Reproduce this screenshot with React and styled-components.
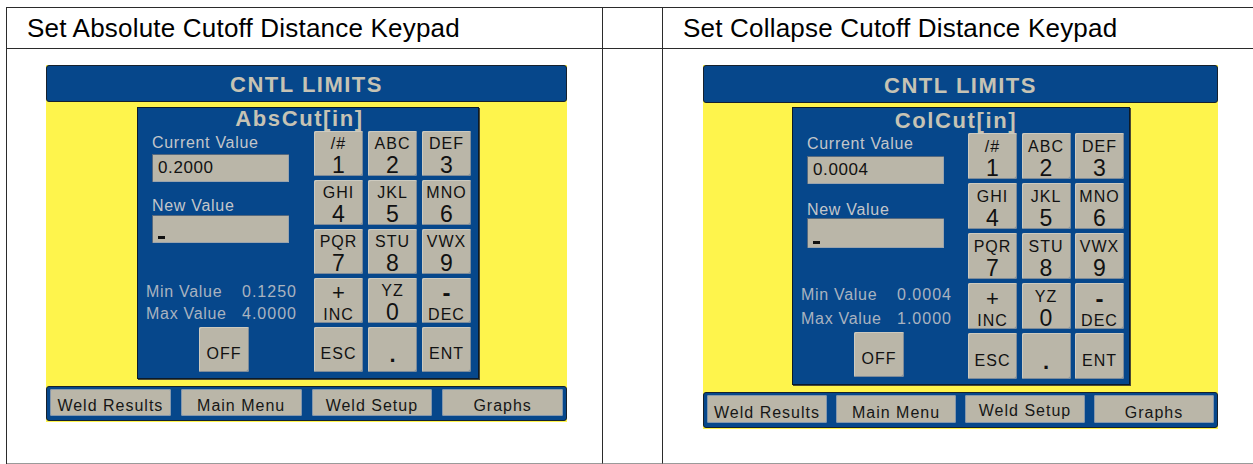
import React from "react";
import styled, { createGlobalStyle } from "styled-components";

const GlobalStyle = createGlobalStyle`
  html, body {
    margin: 0;
    padding: 0;
    background: #fff;
    overflow: hidden;
  }
  body {
    font-family: "Liberation Sans", Arial, sans-serif;
  }
`;

const BLUE = "#06478b";
const TAN = "#bab6a8";
const YELLOW = "#fef44c";

const Sheet = styled.div`
  display: grid;
  grid-template-columns: 596px 60px 620px;
  grid-template-rows: 41px 415px;
  width: max-content;
  margin: 7px 0 0 6px;
  border-left: 1px solid #2b2b2b;
  border-top: 1px solid #2b2b2b;
`;

const HeadCell = styled.div`
  box-sizing: border-box;
  display: flex;
  align-items: center;
  padding-left: 20px;
  border-right: 1px solid #2b2b2b;
  border-bottom: 1px solid #2b2b2b;
  font-size: 26px;
  letter-spacing: 0.2px;
  color: #000;
`;

const BodyCell = styled.div`
  box-sizing: border-box;
  padding: 16px 0 0 ${(p) => p.$inset || 0}px;
  border-right: 1px solid #2b2b2b;
  border-bottom: 1px solid #9a9a9a;
`;

const Screen = styled.div`
  width: ${(p) => p.$w}px;
  background: ${YELLOW};
  padding-bottom: 1px;
  display: flex;
  flex-direction: column;
`;

const TitleBar = styled.div`
  box-sizing: border-box;
  height: ${(p) => p.$h}px;
  padding-top: 3px;
  display: flex;
  align-items: center;
  justify-content: center;
  background: ${BLUE};
  border: 1px solid #16212d;
  border-radius: 3px;
  color: #c6c3b4;
  font-size: 22px;
  font-weight: bold;
  letter-spacing: 1.5px;
`;

const Panel = styled.div`
  box-sizing: border-box;
  width: ${(p) => p.$w}px;
  margin: ${(p) => p.$top}px 0 0 ${(p) => p.$left}px;
  padding: 0 ${(p) => p.$padR}px ${(p) => p.$padB}px 8px;
  background: ${BLUE};
  border: 1px solid #0c1a28;
  box-shadow: 1px 1px 0 #4d4b32;
`;

const PanelTitle = styled.div`
  box-sizing: border-box;
  height: ${(p) => p.$h}px;
  padding: ${(p) => p.$top}px ${(p) => p.$shift}px 0 0;
  text-align: center;
  line-height: 21px;
  color: #c6c3b4;
  font-size: 22px;
  font-weight: bold;
  letter-spacing: 1.6px;
`;

const PanelBody = styled.div`
  display: flex;
  justify-content: space-between;
`;

const Info = styled.div`
  display: flex;
  flex-direction: column;
  align-items: flex-start;
`;

const FieldLabel = styled.div`
  margin: ${(p) => p.$top}px 0 0 6px;
  line-height: 16px;
  font-size: 16px;
  letter-spacing: 0.7px;
  color: #c3c6ca;
`;

const Field = styled.div`
  box-sizing: border-box;
  width: 137px;
  height: ${(p) => p.$h}px;
  margin: ${(p) => p.$top}px 0 0 6px;
  padding: 0 0 ${(p) => (p.$cursor ? 4 : 0)}px 6px;
  display: flex;
  align-items: ${(p) => (p.$cursor ? "flex-end" : "center")};
  background: ${TAN};
  box-shadow: inset 1px 1px 0 #55697f, inset -1px -1px 0 #9aa4ae;
  font-size: 17px;
  letter-spacing: 0.6px;
  color: #111;
`;

const Cursor = styled.span`
  display: block;
  width: 7px;
  height: 3px;
  background: #111;
`;

const RangeRow = styled.div`
  display: flex;
  margin-top: ${(p) => p.$top}px;
  line-height: 18px;
  font-size: 16px;
  color: #a9b3c0;
`;

const RangeName = styled.span`
  width: 96px;
  letter-spacing: 0.7px;
`;

const RangeValue = styled.span`
  letter-spacing: 1px;
`;

const Keys = styled.div`
  display: grid;
  grid-template-columns: repeat(3, 49px);
  grid-auto-rows: ${(p) => p.$h}px;
  column-gap: ${(p) => p.$gx}px;
  row-gap: ${(p) => p.$gy}px;
`;

const Key = styled.div`
  box-sizing: border-box;
  display: flex;
  flex-direction: column;
  align-items: center;
  justify-content: flex-end;
  gap: ${(p) => p.$gap || 0}px;
  padding-bottom: ${(p) => p.$pb || 0}px;
  background: ${TAN};
  border-radius: 2px;
  box-shadow: inset 1px 1px 0 #cdcabf, inset -1px -1px 0 #7d8b9a;
  color: #111;
`;

const OffKey = styled(Key)`
  width: 50px;
  height: 45px;
  margin: ${(p) => p.$top}px 0 0 53px;
`;

const KeySmall = styled.span`
  font-size: 16px;
  line-height: 16px;
  letter-spacing: 1px;
`;

const KeyBig = styled.span`
  font-size: ${(p) => p.$size || 23}px;
  font-weight: ${(p) => (p.$bold ? "bold" : "normal")};
  line-height: ${(p) => p.$lh || 20}px;
`;

const NavBar = styled.div`
  display: flex;
  gap: ${(p) => p.$gap}px;
  margin-top: 7px;
  padding: 2px 3px 4px;
  background: ${BLUE};
  border: 1px solid #16212d;
  border-radius: 3px;
`;

const NavButton = styled.div`
  box-sizing: border-box;
  flex: 1;
  height: ${(p) => p.$h}px;
  padding-bottom: ${(p) => 2 + (p.$lift || 0)}px;
  display: flex;
  align-items: flex-end;
  justify-content: center;
  background: ${TAN};
  border-radius: 2px;
  box-shadow: inset 0 0 0 1px #8397ad;
  font-size: 16px;
  line-height: 16px;
  letter-spacing: 1px;
  color: #161616;
`;

const KEYS = [
  { top: "/#", main: "1" },
  { top: "ABC", main: "2" },
  { top: "DEF", main: "3" },
  { top: "GHI", main: "4" },
  { top: "JKL", main: "5" },
  { top: "MNO", main: "6" },
  { top: "PQR", main: "7" },
  { top: "STU", main: "8" },
  { top: "VWX", main: "9" },
  { sign: "+", bottom: "INC" },
  { top: "YZ", main: "0" },
  { sign: "-", bottom: "DEC", bold: true },
  { label: "ESC" },
  { dot: "." },
  { label: "ENT" },
];

const NAV = ["Weld Results", "Main Menu", "Weld Setup", "Graphs"];

const LEFT = {
  name: "AbsCut[in]",
  current: "0.2000",
  min: "0.1250",
  max: "4.0000",
  width: 521,
  barH: 37,
  panelTop: 5,
  panelLeft: 91,
  panelW: 342,
  titleH: 23,
  titleTop: 0,
  titleShift: 18,
  keyH: 45,
  gapY: 4,
  gapX: 5,
  padR: 7,
  padB: 6,
  l1: 4,
  f1: 3,
  fh1: 28,
  l2: 16,
  f2: 1,
  fh2: 28,
  r1: 39.5,
  r2: 4,
  off: 4.5,
  btnH: 27,
  btnGap: 10,
  lift: [0, 0, 0, 0],
};

const RIGHT = {
  name: "ColCut[in]",
  current: "0.0004",
  min: "0.0004",
  max: "1.0000",
  width: 515,
  barH: 38,
  panelTop: 4,
  panelLeft: 89,
  panelW: 338,
  titleH: 25,
  titleTop: 2,
  titleShift: 13,
  keyH: 45.5,
  gapY: 4.5,
  gapX: 4.5,
  padR: 5,
  padB: 5,
  l1: 2.5,
  f1: 4.5,
  fh1: 28,
  l2: 17.5,
  f2: 0,
  fh2: 30,
  r1: 38,
  r2: 6,
  off: 4.5,
  btnH: 28,
  btnGap: 9,
  lift: [0, 0, 2, 0],
};

const PadKey = ({ k }) => {
  if (k.label) {
    return (
      <Key $pb={10}>
        <KeySmall>{k.label}</KeySmall>
      </Key>
    );
  }
  if (k.dot) {
    return (
      <Key $pb={9}>
        <KeyBig $size={22} $bold $lh={16}>
          {k.dot}
        </KeyBig>
      </Key>
    );
  }
  if (k.sign) {
    return (
      <Key $gap={4}>
        <KeyBig $size={k.bold ? 24 : 22} $bold={k.bold}>
          {k.sign}
        </KeyBig>
        <KeySmall>{k.bottom}</KeySmall>
      </Key>
    );
  }
  return (
    <Key $gap={3} $pb={1}>
      <KeySmall>{k.top}</KeySmall>
      <KeyBig>{k.main}</KeyBig>
    </Key>
  );
};

const Keypad = ({ s }) => (
  <Screen $w={s.width}>
    <TitleBar $h={s.barH}>CNTL LIMITS</TitleBar>
    <Panel $w={s.panelW} $top={s.panelTop} $left={s.panelLeft} $padR={s.padR} $padB={s.padB}>
      <PanelTitle $h={s.titleH} $top={s.titleTop} $shift={s.titleShift}>
        {s.name}
      </PanelTitle>
      <PanelBody>
        <Info>
          <FieldLabel $top={s.l1}>Current Value</FieldLabel>
          <Field $top={s.f1} $h={s.fh1}>
            {s.current}
          </Field>
          <FieldLabel $top={s.l2}>New Value</FieldLabel>
          <Field $top={s.f2} $h={s.fh2} $cursor>
            <Cursor />
          </Field>
          <RangeRow $top={s.r1}>
            <RangeName>Min Value</RangeName>
            <RangeValue>{s.min}</RangeValue>
          </RangeRow>
          <RangeRow $top={s.r2}>
            <RangeName>Max Value</RangeName>
            <RangeValue>{s.max}</RangeValue>
          </RangeRow>
          <OffKey $top={s.off} $pb={10}>
            <KeySmall>OFF</KeySmall>
          </OffKey>
        </Info>
        <Keys $h={s.keyH} $gx={s.gapX} $gy={s.gapY}>
          {KEYS.map((k, i) => (
            <PadKey key={i} k={k} />
          ))}
        </Keys>
      </PanelBody>
    </Panel>
    <NavBar $gap={s.btnGap}>
      {NAV.map((label, i) => (
        <NavButton key={label} $h={s.btnH} $lift={s.lift[i]}>
          {label}
        </NavButton>
      ))}
    </NavBar>
  </Screen>
);

export default function App() {
  return (
    <>
      <GlobalStyle />
      <Sheet>
        <HeadCell>Set Absolute Cutoff Distance Keypad</HeadCell>
        <HeadCell />
        <HeadCell>Set Collapse Cutoff Distance Keypad</HeadCell>
        <BodyCell $inset={39}>
          <Keypad s={LEFT} />
        </BodyCell>
        <BodyCell />
        <BodyCell $inset={40}>
          <Keypad s={RIGHT} />
        </BodyCell>
      </Sheet>
    </>
  );
}
